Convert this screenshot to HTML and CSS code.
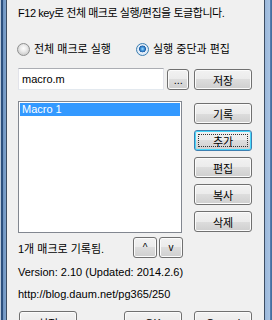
FILE: index.html
```html
<html>
<head>
    <link rel="stylesheet" href="styles.css">
</head>
<body>
<div class="window">
    <div class="frame-left"></div>
    <div class="dialog">
        <p class="hint">F12 key로 전체 매크로 실행/편집을 토글합니다.</p>

        <div class="radios">
            <label class="opt opt-all"><span class="radio"></span>전체 매크로 실행</label>
            <label class="opt"><span class="radio checked"></span>실행 중단과 편집</label>
        </div>

        <div class="file-row">
            <div class="textbox">macro.m</div>
            <button class="btn btn-dots">...</button>
            <button class="btn btn-side">저장</button>
        </div>

        <div class="main">
            <ul class="listbox">
                <li class="selected">Macro 1</li>
            </ul>
            <div class="side-buttons">
                <button class="btn btn-side">기록</button>
                <button class="btn btn-side btn-focus"><span class="focus-rect">추가</span></button>
                <button class="btn btn-side">편집</button>
                <button class="btn btn-side">복사</button>
                <button class="btn btn-side">삭제</button>
            </div>
        </div>

        <div class="status-row">
            <span>1개 매크로 기록됨.</span>
            <div class="arrows">
                <button class="btn btn-arrow">^</button>
                <button class="btn btn-arrow">v</button>
            </div>
        </div>

        <p class="info">Version: 2.10 (Updated: 2014.2.6)</p>
        <p class="info info-url">http://blog.daum.net/pg365/250</p>

        <div class="bottom-row">
            <button class="btn btn-side btn-setup">설정</button>
            <button class="btn btn-side btn-ok">OK</button>
            <button class="btn btn-side">Cancel</button>
        </div>
    </div>
    <div class="frame-right"></div>
</div>
</body>
</html>
```

FILE: styles.css
```css
body {
    margin: 0;
    width: 272px;
    height: 320px;
    overflow: hidden;
    font-family: "Liberation Sans", "Noto Sans CJK KR", sans-serif;
    font-size: 11px;
    color: #000;
}

.window {
    display: flex;
    height: 320px;
}

.frame-left {
    width: 7px;
    background: linear-gradient(to right, #b9c9dc 0px, #b9c9dc 1px, #2c507e 1px, #2c507e 3px, #6d93c1 3px, #7fa3cd 6px, #3d4e63 6px);
}

.frame-right {
    width: 8px;
    background: linear-gradient(to right, #3d4e63 0px, #3d4e63 1px, #9ab7da 1px, #a9c4e3 6px, #5b84b5 6px, #3f6797 8px);
}

.dialog {
    width: 257px;
    background: #f0f0f0;
    padding: 0 12px 0 11px;
    box-sizing: border-box;
    display: flex;
    flex-direction: column;
}

p {
    margin: 0;
    line-height: 13px;
    white-space: nowrap;
}

.hint {
    margin-top: 7px;
    letter-spacing: -0.45px;
}

.radios {
    display: flex;
    margin-top: 23px;
    height: 13px;
    line-height: 13px;
}

.opt {
    display: flex;
    align-items: center;
    white-space: nowrap;
}

.opt-all {
    width: 119px;
    margin-left: -1px;
}

.radio {
    width: 11px;
    height: 11px;
    border: 1px solid #8e8f8f;
    border-radius: 50%;
    margin-right: 4px;
    background: radial-gradient(circle at 50% 40%, #fdfdfd 0, #ececec 3px, #d2d2d2 6px);
}

.radio.checked {
    border-color: #3c7fb1;
    background: radial-gradient(circle at 50% 45%, #a8dcff 0, #4a9ee0 1.5px, #1d5ea6 3.2px, #e4eef8 3.7px, #dae7f5 6px);
}

.file-row {
    display: flex;
    align-items: flex-end;
    margin-top: 12px;
    height: 22px;
}

.textbox {
    width: 147px;
    height: 22px;
    box-sizing: border-box;
    background: #fff;
    border: 1px solid #e2e3ea;
    border-top-color: #abadb3;
    border-bottom-color: #e3e9ef;
    padding: 3px 0 0 3px;
    line-height: 14px;
}

.btn {
    font-family: "Liberation Sans", "Noto Sans CJK KR", sans-serif;
    font-size: 11px;
    color: #000;
    height: 21px;
    padding: 0;
    border: 1px solid #707070;
    border-radius: 3px;
    background: linear-gradient(#f2f2f2 0%, #ebebeb 50%, #dddddd 50%, #cfcfcf 100%);
    box-shadow: inset 0 0 0 1px #fbfbfb;
    box-sizing: border-box;
}

.btn-dots {
    width: 22px;
    margin-left: 3px;
    line-height: 10px;
}

.btn-side {
    width: 58px;
}

.file-row .btn-side {
    margin-left: 5px;
}

.main {
    display: flex;
    margin-top: 11px;
    height: 132px;
}

.listbox {
    list-style: none;
    margin: 0;
    padding: 1px;
    width: 165px;
    height: 132px;
    box-sizing: border-box;
    background: #fff;
    border: 1px solid #828790;
}

.listbox li {
    height: 13px;
    line-height: 13px;
    padding-left: 2px;
}

.listbox .selected {
    background: #3399ff;
    color: #fff;
}

.side-buttons {
    display: flex;
    flex-direction: column;
    gap: 6px;
    margin-left: 12px;
    padding-top: 2px;
}

.btn-focus {
    border-color: #3c7fb1;
    box-shadow: inset 0 0 0 1px #48d8fb;
    padding: 3px;
}

.focus-rect {
    display: flex;
    align-items: center;
    justify-content: center;
    height: 13px;
    box-sizing: border-box;
    border: 1px dotted #333;
}

.status-row {
    display: flex;
    justify-content: space-between;
    align-items: center;
    width: 165px;
    margin-top: 4px;
    height: 21px;
}

.arrows {
    display: flex;
    gap: 2px;
}

.btn-arrow {
    width: 24px;
    height: 21px;
    font-size: 10px;
}

.info {
    margin-top: 8px;
}

.info-url {
    margin-top: 9px;
}

.bottom-row {
    display: flex;
    margin-top: 10px;
}

.btn-setup {
    margin-left: 1px;
}

.btn-ok {
    margin-left: auto;
    margin-right: 12px;
}

.bottom-row .btn {
    height: 23px;
}
```
